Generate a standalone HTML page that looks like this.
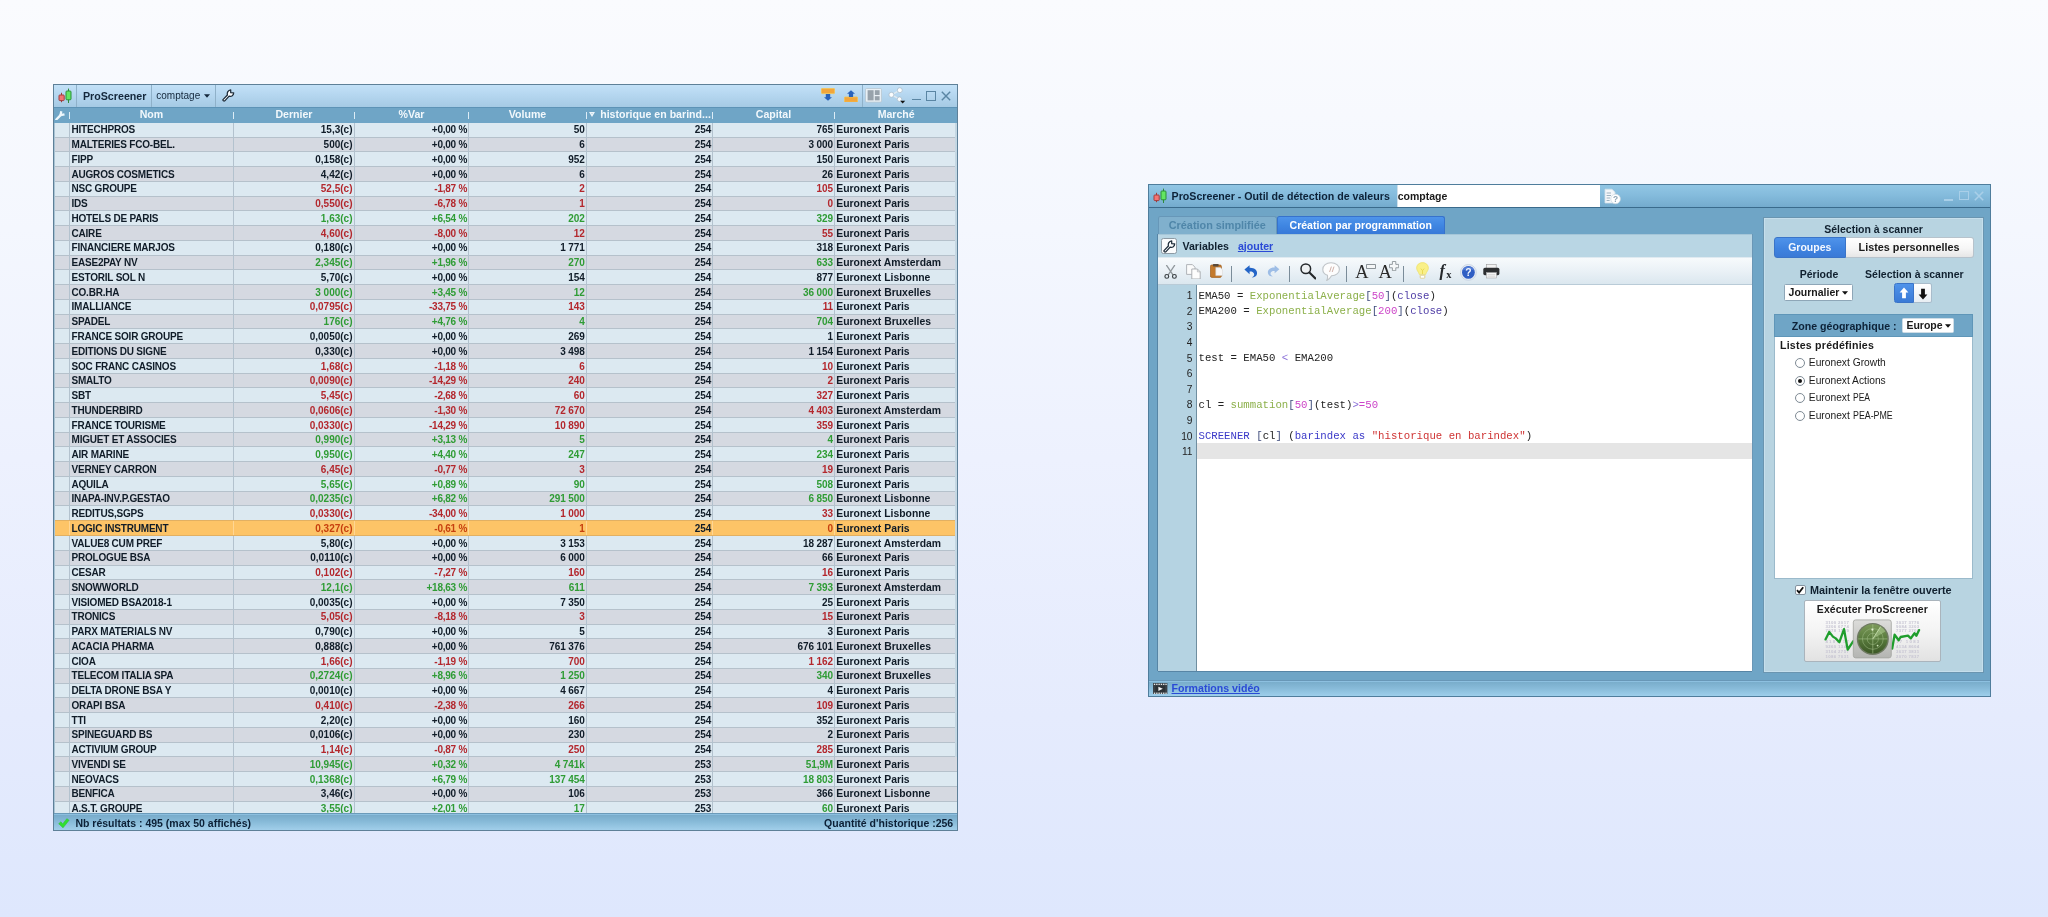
<!DOCTYPE html>
<html><head><meta charset="utf-8"><title>ProScreener</title>
<style>
*{box-sizing:border-box;margin:0;padding:0}
html,body{width:2048px;height:917px;overflow:hidden}
body{font-family:"Liberation Sans",sans-serif;font-size:10.6px;background:linear-gradient(180deg,#fafbfe 0%,#f4f7fe 25%,#edf1fe 50%,#e5ebfd 78%,#dee7fd 100%);position:relative;color:#10202f}
.abs{position:absolute}
b,.b{font-weight:bold}
/* ---------- left window ---------- */
#lw{will-change:transform;position:absolute;left:53px;top:84px;width:905px;height:746.6px;background:#a9c3d4;overflow:hidden}
#lw .frame{position:absolute;left:0;top:0;right:0;bottom:0;border:1px solid #5e8098;z-index:20;pointer-events:none}
#ltb{position:absolute;left:0;top:0;width:100%;height:22.9px;background:linear-gradient(180deg,#c4e2f8 0%,#b6d7f0 45%,#a5cae4 100%)}
#ltb .sp{position:absolute;top:1px;width:1.2px;height:22px;background:#8fb1c9}
#lhd{position:absolute;left:0;top:22.9px;width:100%;height:15.9px;background:#6fa5c6;color:#f2f8fc;font-weight:bold;font-size:10.6px;line-height:15.9px;border-top:1px solid #5d93b6}
#lhd .h{position:absolute;top:-1px;text-align:center;white-space:nowrap}
#lhd .t{position:absolute;top:4.2px;width:1px;height:7.4px;background:#dcecf6}
.row{position:absolute;left:1.5px;width:902.5px;height:14.757px;font-weight:bold;font-size:10px;line-height:14.757px;white-space:nowrap;color:#101c28}
.row:after{content:"";position:absolute;left:0;right:0;bottom:0;height:1px;background:#b5c1cb}
.row.o{background:#dce9f1}
.row.e{background:#d5d9e1}
.row.hl{background:#fdc467;z-index:6;box-shadow:0 -1px 0 #e2b062}
.hv{position:absolute;top:0;width:1px;height:100%;background:#ffd694}
.row.hl:after{background:#e2b062}
.c{position:absolute;top:.6px;height:100%;overflow:visible}
.c i{font-style:normal;display:inline-block;transform-origin:100% 50%}
.nm{left:17px;letter-spacing:-0.2px}
.d1{right:604.5px;text-align:right}
.d2{right:489.9px;text-align:right}
.d3{right:372.3px;text-align:right}
.d4{right:245.9px;text-align:right}
.d5{right:124px;text-align:right}
.d2{letter-spacing:-.24px}
.d3,.d4,.d5{letter-spacing:-.1px}
.mk{left:781.8px;font-size:10.4px}
.r{color:#b3272d}
.g{color:#2f9c35}
.hl .r{color:#c7400f}
.vs{position:absolute;top:38.8px;width:1px;height:692px;background:#b3c2ce;z-index:5}
#lst{position:absolute;left:0;top:728.6px;width:100%;height:18px;background:linear-gradient(180deg,#6b9bba 0,#6b9bba 1px,#8cbfdf 1px,#8cbfdf 2px,#78abca 2px,#88bbd9 50%,#a4d1ec 100%);font-weight:bold;font-size:10.5px;line-height:17px;color:#0c2036;z-index:10}
/* ---------- right window ---------- */
#rw{will-change:transform;position:absolute;left:1148px;top:184px;width:843px;height:513px;background:#6fa5c6;overflow:hidden}
#rw .frame{position:absolute;left:0;top:0;right:0;bottom:0;border:1px solid #4f7d9c;z-index:20}
#rtb{position:absolute;left:0;top:0;width:100%;height:23.6px;background:linear-gradient(180deg,#93c7e5 0%,#84bbdc 50%,#74abcd 100%);border-bottom:1.2px solid #3a6b8c;font-weight:bold;font-size:10.65px}
#rbot{position:absolute;left:0;top:495.6px;width:100%;height:17.4px;background:linear-gradient(180deg,#6897b7 0,#6897b7 1px,#8dc0e0 1px,#8dc0e0 2px,#79adcb 2px,#88bbd9 50%,#a0d1ee 100%)}
.tab{position:absolute;top:32.3px;height:17.5px;border-radius:2.5px 2.5px 0 0;font-weight:bold;font-size:10.6px;line-height:17.5px;text-align:center;white-space:nowrap}
#ed{position:absolute;left:9.9px;top:49.8px;width:594.2px;height:437.2px;background:#fff;box-shadow:-1px 0 0 #5785a5,1px 0 0 #6a97b6,0 1px 0 #5785a5}
#varbar{position:absolute;left:0;top:0;width:100%;height:23.7px;background:#b9d6e4;border-top:1px solid #a5c6d8}
#tbar{position:absolute;left:0;top:23.7px;width:100%;height:27.5px;background:linear-gradient(180deg,#f7fafc 0%,#eaf1f6 50%,#dbe7ef 100%);border-top:1px solid #dfeaf1;border-bottom:1px solid #b9cbd7}
#gut{position:absolute;left:0;top:51.2px;width:39.4px;height:386px;background:#b5d3e2;border-right:1px solid #6f8ea0}
#code{position:absolute;left:39.4px;top:51.2px;width:554.8px;height:386px;background:#fff}
.ln{position:absolute;left:0;width:34.6px;text-align:right;font-size:10.2px;line-height:15.6px;height:15.6px;color:#222}
.cl{position:absolute;left:1.2px;font-family:"Liberation Mono",monospace;font-size:10.7px;line-height:15.6px;height:15.6px;white-space:pre;color:#222}
.fn{color:#8cb04a}.nu{color:#cc44c8}.kw{color:#3a38c8}.st{color:#cf3434}.op{color:#8a70d8}.br{color:#3f4c7c}
#rp{position:absolute;left:616px;top:33.5px;width:219.2px;height:454.5px;background:#b8d4e1;border:1px solid #c6dfec;box-shadow:0 0 0 1px #6a95b0;font-weight:bold;font-size:10.5px;white-space:nowrap}
.rd{left:30.2px;width:10.2px;height:10.2px;border-radius:50%;background:radial-gradient(circle at 50% 40%,#fff 55%,#eceff1 100%);border:1px solid #7f8b95}
.rd span{position:absolute;left:1.9px;top:1.9px;width:4.4px;height:4.4px;border-radius:50%;background:#111}
.sq{display:inline-block;transform-origin:0 50%}
.rt{left:43.8px;font-weight:normal;font-size:10.25px;line-height:12px;color:#1a1a1a}
.kw2{color:#5240a8}
</style></head><body>

<!-- ================= LEFT WINDOW ================= -->
<div id="lw">
 <div id="ltb">
  <div class="sp" style="left:23px"></div>
  <div class="sp" style="left:98px"></div>
  <div class="sp" style="left:161.9px"></div>
  <div class="sp" style="left:809px"></div>
  <svg class="abs" style="left:4.7px;top:4px" width="15px" height="16px" viewBox="0 0 15 16"><path d="M3.5 4.8V14.2" stroke="#a03a3a" stroke-width="1"/><rect x="1" y="7" width="5.2" height="5.6" rx=".8" fill="#f47474" stroke="#a33c3c" stroke-width="1"/><path d="M10.5 .6V15" stroke="#2f8a3a" stroke-width="1"/><rect x="8" y="3" width="5" height="8.8" rx=".9" fill="#62e662" stroke="#2b8f38" stroke-width="1"/></svg>
<svg class="abs" style="left:169.1px;top:4.6px" width="13" height="13" viewBox="0 0 13 13"><path d="M1 10.6 L5.4 6 C4.8 3.5 6.1 1.1 8.7 .8 L8.7 3.7 L11.7 3.8 C11.7 6.4 9.5 7.7 7.1 7.1 L2.8 11.8 C1.9 12.4 .6 11.6 1 10.6 Z" fill="#fcfdfe" stroke="#1d2b38" stroke-width="1.25" stroke-linejoin="round"/></svg>
<svg class="abs" style="left:767.6px;top:4.4px" width="14" height="13.4" viewBox="0 0 14 13.4"><rect x=".4" y=".4" width="13.2" height="5.2" rx=".8" fill="#f2a63c" stroke="#f6c54e" stroke-width=".8"/><path d="M4.8 6h4.4v3.2h1.8L7 12.8 3 9.2h1.8z" fill="#2a63ba"/></svg>
<svg class="abs" style="left:790.8px;top:5.6px" width="14" height="12.6" viewBox="0 0 14 12.6"><rect x=".4" y="7" width="13.2" height="5.2" rx=".8" fill="#f2a63c" stroke="#f6c54e" stroke-width=".8"/><path d="M4.9 7V3.7H3L7 .2l4 3.5H9.1V7z" fill="#2a63ba"/></svg>
<svg class="abs" style="left:812.1px;top:4px" width="17" height="14.6" viewBox="0 0 17 14.6"><rect x=".5" y=".5" width="16" height="13.6" rx="1" fill="#e9f0f5" stroke="#b7c6d1" stroke-width=".8"/><rect x="2.6" y="2.2" width="6" height="10.2" fill="#97a2ab"/><rect x="9.8" y="2.2" width="4.8" height="4.8" fill="#97a2ab"/><rect x="9.8" y="8.2" width="4.8" height="4.2" fill="#97a2ab"/></svg>
<svg class="abs" style="left:834.8px;top:2.6px" width="19" height="17" viewBox="0 0 19 17"><path d="M3.6 7.8 L11.8 3.2 M3.6 7.8 L11.6 12.2" stroke="#dfe9f0" stroke-width="1.5" fill="none"/><circle cx="3.4" cy="7.8" r="2.5" fill="#fbfdfe" stroke="#a9bccb" stroke-width=".8"/><circle cx="11.8" cy="3.2" r="2.5" fill="#fbfdfe" stroke="#a9bccb" stroke-width=".8"/><circle cx="11.5" cy="12.2" r="2.3" fill="#fbfdfe" stroke="#a9bccb" stroke-width=".8"/><path d="M12.2 13.8h5l-2.5 2.6z" fill="#111"/></svg>
<div class="abs" style="left:858.9px;top:15.2px;width:8.8px;height:1.3px;background:#5a85a3"></div>
<div class="abs" style="left:873.2px;top:7.4px;width:9.8px;height:9.6px;border:1.2px solid #5a85a3;border-top-width:1.6px"></div>
<svg class="abs" style="left:888px;top:7.2px" width="10" height="10" viewBox="0 0 10 10"><path d="M.8 .8 L9.2 9.2 M9.2 .8 L.8 9.2" stroke="#5a85a3" stroke-width="1.4" fill="none"/></svg>
  <div class="abs b" style="left:29.9px;top:5.9px;font-size:10.7px;line-height:12px;color:#14283c">ProScreener</div>
  <div class="abs" style="left:103.3px;top:6.4px;font-size:10px;line-height:12px;color:#14283c">comptage</div>
  <svg class="abs" style="left:151.4px;top:10.4px" width="6" height="4" viewBox="0 0 6 4"><path d="M0 .2H6L3 3.8z" fill="#14283c"/></svg>
 </div>
 <div id="lhd">
  <div class="t" style="left:16px"></div>
<div class="t" style="left:180px"></div>
<div class="t" style="left:301px"></div>
<div class="t" style="left:415px"></div>
<div class="t" style="left:533px"></div>
<div class="t" style="left:659px"></div>
<div class="t" style="left:781px"></div>
<div class="h" style="left:16.4px;width:164.1px">Nom</div>
<div class="h" style="left:180.5px;width:120.9px">Dernier</div>
<div class="h" style="left:301.4px;width:114.2px">%Var</div>
<div class="h" style="left:415.6px;width:117.8px">Volume</div>
<div class="h" style="left:547.2px;text-align:left">historique en barind...</div>
<div class="abs" style="left:535.9px;top:4.6px;width:0;height:0;border-left:3.4px solid transparent;border-right:3.4px solid transparent;border-top:5.2px solid #edf5fa"></div>
<div class="abs" style="left:538.1px;top:5.6px;width:0;height:0;border-left:1.2px solid transparent;border-right:1.2px solid transparent;border-top:1.8px solid #a9c9dd"></div>
<div class="h" style="left:659.6px;width:121.8px">Capital</div>
<div class="h" style="left:781.4px;width:123.6px">Marché</div>
<svg class="abs" style="left:2.2px;top:1.7px" width="10.6" height="10.6" viewBox="0 0 10.6 10.6"><path d="M1.3 9.5 L5.6 5.1" stroke="#eef7fc" stroke-width="2.3" stroke-linecap="round" fill="none"/><path d="M5.5 5.2 L6.3 1.2 M5.5 5.2 L9.5 4.4" stroke="#eef7fc" stroke-width="2.3" stroke-linecap="butt" fill="none"/></svg>
 </div>
<div class="row o" style="top:38.8px"><span class="c nm">HITECHPROS</span><span class="c d1 k"><i>15,3(c)</i></span><span class="c d2 k"><i>+0,00 %</i></span><span class="c d3 k"><i>50</i></span><span class="c d4"><i>254</i></span><span class="c d5 k"><i>765</i></span><span class="c mk">Euronext Paris</span></div>
<div class="row e" style="top:53.56px"><span class="c nm">MALTERIES FCO-BEL.</span><span class="c d1 k"><i>500(c)</i></span><span class="c d2 k"><i>+0,00 %</i></span><span class="c d3 k"><i>6</i></span><span class="c d4"><i>254</i></span><span class="c d5 k"><i>3 000</i></span><span class="c mk">Euronext Paris</span></div>
<div class="row o" style="top:68.31px"><span class="c nm">FIPP</span><span class="c d1 k"><i>0,158(c)</i></span><span class="c d2 k"><i>+0,00 %</i></span><span class="c d3 k"><i>952</i></span><span class="c d4"><i>254</i></span><span class="c d5 k"><i>150</i></span><span class="c mk">Euronext Paris</span></div>
<div class="row e" style="top:83.07px"><span class="c nm">AUGROS COSMETICS</span><span class="c d1 k"><i>4,42(c)</i></span><span class="c d2 k"><i>+0,00 %</i></span><span class="c d3 k"><i>6</i></span><span class="c d4"><i>254</i></span><span class="c d5 k"><i>26</i></span><span class="c mk">Euronext Paris</span></div>
<div class="row o" style="top:97.83px"><span class="c nm">NSC GROUPE</span><span class="c d1 r"><i>52,5(c)</i></span><span class="c d2 r"><i>-1,87 %</i></span><span class="c d3 r"><i>2</i></span><span class="c d4"><i>254</i></span><span class="c d5 r"><i>105</i></span><span class="c mk">Euronext Paris</span></div>
<div class="row e" style="top:112.58px"><span class="c nm">IDS</span><span class="c d1 r"><i>0,550(c)</i></span><span class="c d2 r"><i>-6,78 %</i></span><span class="c d3 r"><i>1</i></span><span class="c d4"><i>254</i></span><span class="c d5 r"><i>0</i></span><span class="c mk">Euronext Paris</span></div>
<div class="row o" style="top:127.34px"><span class="c nm">HOTELS DE PARIS</span><span class="c d1 g"><i>1,63(c)</i></span><span class="c d2 g"><i>+6,54 %</i></span><span class="c d3 g"><i>202</i></span><span class="c d4"><i>254</i></span><span class="c d5 g"><i>329</i></span><span class="c mk">Euronext Paris</span></div>
<div class="row e" style="top:142.1px"><span class="c nm">CAIRE</span><span class="c d1 r"><i>4,60(c)</i></span><span class="c d2 r"><i>-8,00 %</i></span><span class="c d3 r"><i>12</i></span><span class="c d4"><i>254</i></span><span class="c d5 r"><i>55</i></span><span class="c mk">Euronext Paris</span></div>
<div class="row o" style="top:156.86px"><span class="c nm">FINANCIERE MARJOS</span><span class="c d1 k"><i>0,180(c)</i></span><span class="c d2 k"><i>+0,00 %</i></span><span class="c d3 k"><i>1 771</i></span><span class="c d4"><i>254</i></span><span class="c d5 k"><i>318</i></span><span class="c mk">Euronext Paris</span></div>
<div class="row e" style="top:171.61px"><span class="c nm">EASE2PAY NV</span><span class="c d1 g"><i>2,345(c)</i></span><span class="c d2 g"><i>+1,96 %</i></span><span class="c d3 g"><i>270</i></span><span class="c d4"><i>254</i></span><span class="c d5 g"><i>633</i></span><span class="c mk">Euronext Amsterdam</span></div>
<div class="row o" style="top:186.37px"><span class="c nm">ESTORIL SOL N</span><span class="c d1 k"><i>5,70(c)</i></span><span class="c d2 k"><i>+0,00 %</i></span><span class="c d3 k"><i>154</i></span><span class="c d4"><i>254</i></span><span class="c d5 k"><i>877</i></span><span class="c mk">Euronext Lisbonne</span></div>
<div class="row e" style="top:201.13px"><span class="c nm">CO.BR.HA</span><span class="c d1 g"><i>3 000(c)</i></span><span class="c d2 g"><i>+3,45 %</i></span><span class="c d3 g"><i>12</i></span><span class="c d4"><i>254</i></span><span class="c d5 g"><i>36 000</i></span><span class="c mk">Euronext Bruxelles</span></div>
<div class="row o" style="top:215.88px"><span class="c nm">IMALLIANCE</span><span class="c d1 r"><i>0,0795(c)</i></span><span class="c d2 r"><i>-33,75 %</i></span><span class="c d3 r"><i>143</i></span><span class="c d4"><i>254</i></span><span class="c d5 r"><i>11</i></span><span class="c mk">Euronext Paris</span></div>
<div class="row e" style="top:230.64px"><span class="c nm">SPADEL</span><span class="c d1 g"><i>176(c)</i></span><span class="c d2 g"><i>+4,76 %</i></span><span class="c d3 g"><i>4</i></span><span class="c d4"><i>254</i></span><span class="c d5 g"><i>704</i></span><span class="c mk">Euronext Bruxelles</span></div>
<div class="row o" style="top:245.4px"><span class="c nm">FRANCE SOIR GROUPE</span><span class="c d1 k"><i>0,0050(c)</i></span><span class="c d2 k"><i>+0,00 %</i></span><span class="c d3 k"><i>269</i></span><span class="c d4"><i>254</i></span><span class="c d5 k"><i>1</i></span><span class="c mk">Euronext Paris</span></div>
<div class="row e" style="top:260.15px"><span class="c nm">EDITIONS DU SIGNE</span><span class="c d1 k"><i>0,330(c)</i></span><span class="c d2 k"><i>+0,00 %</i></span><span class="c d3 k"><i>3 498</i></span><span class="c d4"><i>254</i></span><span class="c d5 k"><i>1 154</i></span><span class="c mk">Euronext Paris</span></div>
<div class="row o" style="top:274.91px"><span class="c nm">SOC FRANC CASINOS</span><span class="c d1 r"><i>1,68(c)</i></span><span class="c d2 r"><i>-1,18 %</i></span><span class="c d3 r"><i>6</i></span><span class="c d4"><i>254</i></span><span class="c d5 r"><i>10</i></span><span class="c mk">Euronext Paris</span></div>
<div class="row e" style="top:289.67px"><span class="c nm">SMALTO</span><span class="c d1 r"><i>0,0090(c)</i></span><span class="c d2 r"><i>-14,29 %</i></span><span class="c d3 r"><i>240</i></span><span class="c d4"><i>254</i></span><span class="c d5 r"><i>2</i></span><span class="c mk">Euronext Paris</span></div>
<div class="row o" style="top:304.43px"><span class="c nm">SBT</span><span class="c d1 r"><i>5,45(c)</i></span><span class="c d2 r"><i>-2,68 %</i></span><span class="c d3 r"><i>60</i></span><span class="c d4"><i>254</i></span><span class="c d5 r"><i>327</i></span><span class="c mk">Euronext Paris</span></div>
<div class="row e" style="top:319.18px"><span class="c nm">THUNDERBIRD</span><span class="c d1 r"><i>0,0606(c)</i></span><span class="c d2 r"><i>-1,30 %</i></span><span class="c d3 r"><i>72 670</i></span><span class="c d4"><i>254</i></span><span class="c d5 r"><i>4 403</i></span><span class="c mk">Euronext Amsterdam</span></div>
<div class="row o" style="top:333.94px"><span class="c nm">FRANCE TOURISME</span><span class="c d1 r"><i>0,0330(c)</i></span><span class="c d2 r"><i>-14,29 %</i></span><span class="c d3 r"><i>10 890</i></span><span class="c d4"><i>254</i></span><span class="c d5 r"><i>359</i></span><span class="c mk">Euronext Paris</span></div>
<div class="row e" style="top:348.7px"><span class="c nm">MIGUET ET ASSOCIES</span><span class="c d1 g"><i>0,990(c)</i></span><span class="c d2 g"><i>+3,13 %</i></span><span class="c d3 g"><i>5</i></span><span class="c d4"><i>254</i></span><span class="c d5 g"><i>4</i></span><span class="c mk">Euronext Paris</span></div>
<div class="row o" style="top:363.45px"><span class="c nm">AIR MARINE</span><span class="c d1 g"><i>0,950(c)</i></span><span class="c d2 g"><i>+4,40 %</i></span><span class="c d3 g"><i>247</i></span><span class="c d4"><i>254</i></span><span class="c d5 g"><i>234</i></span><span class="c mk">Euronext Paris</span></div>
<div class="row e" style="top:378.21px"><span class="c nm">VERNEY CARRON</span><span class="c d1 r"><i>6,45(c)</i></span><span class="c d2 r"><i>-0,77 %</i></span><span class="c d3 r"><i>3</i></span><span class="c d4"><i>254</i></span><span class="c d5 r"><i>19</i></span><span class="c mk">Euronext Paris</span></div>
<div class="row o" style="top:392.97px"><span class="c nm">AQUILA</span><span class="c d1 g"><i>5,65(c)</i></span><span class="c d2 g"><i>+0,89 %</i></span><span class="c d3 g"><i>90</i></span><span class="c d4"><i>254</i></span><span class="c d5 g"><i>508</i></span><span class="c mk">Euronext Paris</span></div>
<div class="row e" style="top:407.73px"><span class="c nm">INAPA-INV.P.GESTAO</span><span class="c d1 g"><i>0,0235(c)</i></span><span class="c d2 g"><i>+6,82 %</i></span><span class="c d3 g"><i>291 500</i></span><span class="c d4"><i>254</i></span><span class="c d5 g"><i>6 850</i></span><span class="c mk">Euronext Lisbonne</span></div>
<div class="row o" style="top:422.48px"><span class="c nm">REDITUS,SGPS</span><span class="c d1 r"><i>0,0330(c)</i></span><span class="c d2 r"><i>-34,00 %</i></span><span class="c d3 r"><i>1 000</i></span><span class="c d4"><i>254</i></span><span class="c d5 r"><i>33</i></span><span class="c mk">Euronext Lisbonne</span></div>
<div class="row hl" style="top:437.24px"><span class="c nm">LOGIC INSTRUMENT</span><span class="c d1 r"><i>0,327(c)</i></span><span class="c d2 r"><i>-0,61 %</i></span><span class="c d3 r"><i>1</i></span><span class="c d4"><i>254</i></span><span class="c d5 r"><i>0</i></span><span class="c mk">Euronext Paris</span><div class="hv" style="left:14px"></div><div class="hv" style="left:178px"></div><div class="hv" style="left:299px"></div><div class="hv" style="left:413px"></div><div class="hv" style="left:531px"></div><div class="hv" style="left:657px"></div><div class="hv" style="left:779px"></div></div>
<div class="row o" style="top:452px"><span class="c nm">VALUE8 CUM PREF</span><span class="c d1 k"><i>5,80(c)</i></span><span class="c d2 k"><i>+0,00 %</i></span><span class="c d3 k"><i>3 153</i></span><span class="c d4"><i>254</i></span><span class="c d5 k"><i>18 287</i></span><span class="c mk">Euronext Amsterdam</span></div>
<div class="row e" style="top:466.75px"><span class="c nm">PROLOGUE BSA</span><span class="c d1 k"><i>0,0110(c)</i></span><span class="c d2 k"><i>+0,00 %</i></span><span class="c d3 k"><i>6 000</i></span><span class="c d4"><i>254</i></span><span class="c d5 k"><i>66</i></span><span class="c mk">Euronext Paris</span></div>
<div class="row o" style="top:481.51px"><span class="c nm">CESAR</span><span class="c d1 r"><i>0,102(c)</i></span><span class="c d2 r"><i>-7,27 %</i></span><span class="c d3 r"><i>160</i></span><span class="c d4"><i>254</i></span><span class="c d5 r"><i>16</i></span><span class="c mk">Euronext Paris</span></div>
<div class="row e" style="top:496.27px"><span class="c nm">SNOWWORLD</span><span class="c d1 g"><i>12,1(c)</i></span><span class="c d2 g"><i>+18,63 %</i></span><span class="c d3 g"><i>611</i></span><span class="c d4"><i>254</i></span><span class="c d5 g"><i>7 393</i></span><span class="c mk">Euronext Amsterdam</span></div>
<div class="row o" style="top:511.02px"><span class="c nm">VISIOMED BSA2018-1</span><span class="c d1 k"><i>0,0035(c)</i></span><span class="c d2 k"><i>+0,00 %</i></span><span class="c d3 k"><i>7 350</i></span><span class="c d4"><i>254</i></span><span class="c d5 k"><i>25</i></span><span class="c mk">Euronext Paris</span></div>
<div class="row e" style="top:525.78px"><span class="c nm">TRONICS</span><span class="c d1 r"><i>5,05(c)</i></span><span class="c d2 r"><i>-8,18 %</i></span><span class="c d3 r"><i>3</i></span><span class="c d4"><i>254</i></span><span class="c d5 r"><i>15</i></span><span class="c mk">Euronext Paris</span></div>
<div class="row o" style="top:540.54px"><span class="c nm">PARX MATERIALS NV</span><span class="c d1 k"><i>0,790(c)</i></span><span class="c d2 k"><i>+0,00 %</i></span><span class="c d3 k"><i>5</i></span><span class="c d4"><i>254</i></span><span class="c d5 k"><i>3</i></span><span class="c mk">Euronext Paris</span></div>
<div class="row e" style="top:555.29px"><span class="c nm">ACACIA PHARMA</span><span class="c d1 k"><i>0,888(c)</i></span><span class="c d2 k"><i>+0,00 %</i></span><span class="c d3 k"><i>761 376</i></span><span class="c d4"><i>254</i></span><span class="c d5 k"><i>676 101</i></span><span class="c mk">Euronext Bruxelles</span></div>
<div class="row o" style="top:570.05px"><span class="c nm">CIOA</span><span class="c d1 r"><i>1,66(c)</i></span><span class="c d2 r"><i>-1,19 %</i></span><span class="c d3 r"><i>700</i></span><span class="c d4"><i>254</i></span><span class="c d5 r"><i>1 162</i></span><span class="c mk">Euronext Paris</span></div>
<div class="row e" style="top:584.81px"><span class="c nm">TELECOM ITALIA SPA</span><span class="c d1 g"><i>0,2724(c)</i></span><span class="c d2 g"><i>+8,96 %</i></span><span class="c d3 g"><i>1 250</i></span><span class="c d4"><i>254</i></span><span class="c d5 g"><i>340</i></span><span class="c mk">Euronext Bruxelles</span></div>
<div class="row o" style="top:599.57px"><span class="c nm">DELTA DRONE BSA Y</span><span class="c d1 k"><i>0,0010(c)</i></span><span class="c d2 k"><i>+0,00 %</i></span><span class="c d3 k"><i>4 667</i></span><span class="c d4"><i>254</i></span><span class="c d5 k"><i>4</i></span><span class="c mk">Euronext Paris</span></div>
<div class="row e" style="top:614.32px"><span class="c nm">ORAPI BSA</span><span class="c d1 r"><i>0,410(c)</i></span><span class="c d2 r"><i>-2,38 %</i></span><span class="c d3 r"><i>266</i></span><span class="c d4"><i>254</i></span><span class="c d5 r"><i>109</i></span><span class="c mk">Euronext Paris</span></div>
<div class="row o" style="top:629.08px"><span class="c nm">TTI</span><span class="c d1 k"><i>2,20(c)</i></span><span class="c d2 k"><i>+0,00 %</i></span><span class="c d3 k"><i>160</i></span><span class="c d4"><i>254</i></span><span class="c d5 k"><i>352</i></span><span class="c mk">Euronext Paris</span></div>
<div class="row e" style="top:643.84px"><span class="c nm">SPINEGUARD BS</span><span class="c d1 k"><i>0,0106(c)</i></span><span class="c d2 k"><i>+0,00 %</i></span><span class="c d3 k"><i>230</i></span><span class="c d4"><i>254</i></span><span class="c d5 k"><i>2</i></span><span class="c mk">Euronext Paris</span></div>
<div class="row o" style="top:658.59px"><span class="c nm">ACTIVIUM GROUP</span><span class="c d1 r"><i>1,14(c)</i></span><span class="c d2 r"><i>-0,87 %</i></span><span class="c d3 r"><i>250</i></span><span class="c d4"><i>254</i></span><span class="c d5 r"><i>285</i></span><span class="c mk">Euronext Paris</span></div>
<div class="row e" style="top:673.35px"><span class="c nm">VIVENDI SE</span><span class="c d1 g"><i>10,945(c)</i></span><span class="c d2 g"><i>+0,32 %</i></span><span class="c d3 g"><i>4 741k</i></span><span class="c d4"><i>253</i></span><span class="c d5 g"><i>51,9M</i></span><span class="c mk">Euronext Paris</span></div>
<div class="row o" style="top:688.11px"><span class="c nm">NEOVACS</span><span class="c d1 g"><i>0,1368(c)</i></span><span class="c d2 g"><i>+6,79 %</i></span><span class="c d3 g"><i>137 454</i></span><span class="c d4"><i>253</i></span><span class="c d5 g"><i>18 803</i></span><span class="c mk">Euronext Paris</span></div>
<div class="row e" style="top:702.86px"><span class="c nm">BENFICA</span><span class="c d1 k"><i>3,46(c)</i></span><span class="c d2 k"><i>+0,00 %</i></span><span class="c d3 k"><i>106</i></span><span class="c d4"><i>253</i></span><span class="c d5 k"><i>366</i></span><span class="c mk">Euronext Lisbonne</span></div>
<div class="row o" style="top:717.62px"><span class="c nm">A.S.T. GROUPE</span><span class="c d1 g"><i>3,55(c)</i></span><span class="c d2 g"><i>+2,01 %</i></span><span class="c d3 g"><i>17</i></span><span class="c d4"><i>253</i></span><span class="c d5 g"><i>60</i></span><span class="c mk">Euronext Paris</span></div>
<div class="vs" style="left:16px"></div><div class="vs" style="left:180px"></div><div class="vs" style="left:301px"></div><div class="vs" style="left:415px"></div><div class="vs" style="left:533px"></div><div class="vs" style="left:659px"></div><div class="vs" style="left:781px"></div>
 <div id="lst">
  <svg class="abs" style="left:5.4px;top:5px" width="11.6" height="10.4" viewBox="0 0 13 12"><path d="M.6 6.6 L3.2 4.4 L5.2 6.8 L10 .8 L12.6 2.6 L5.6 11.4 Z" fill="#2fe02f" stroke="#2bbd2b" stroke-width=".6"/></svg>
  <span class="abs" style="left:22.4px;top:2.3px">Nb résultats : 495 (max 50 affichés)</span>
  <span class="abs" style="right:4.8px;top:2.3px">Quantité d'historique :256</span>
 </div>
 <div class="abs" style="right:1px;top:38.8px;width:2px;height:634px;background:#c4d7e3;z-index:6"></div>
 <div class="frame"></div>
</div>

<!-- ================= RIGHT WINDOW ================= -->
<div id="rw">
 <div id="rtb">
  <div class="abs" style="left:23.6px;top:6.3px;line-height:12px;color:#0d2238;white-space:nowrap">ProScreener - Outil de détection de valeurs</div>
  <div class="abs" style="left:248.7px;top:0.8px;width:203.1px;height:22px;background:#fff;border-left:1px solid #cfe0ea"><span class="abs" style="left:0;top:5.5px;font-size:10.5px;line-height:12px;color:#1b1b1b">comptage</span></div>
  <svg class="abs" style="left:5.4px;top:4.1px" width="15px" height="16px" viewBox="0 0 15 16"><path d="M3.5 4.8V14.2" stroke="#a03a3a" stroke-width="1"/><rect x="1" y="7" width="5.2" height="5.6" rx=".8" fill="#f47474" stroke="#a33c3c" stroke-width="1"/><path d="M10.5 .6V15" stroke="#2f8a3a" stroke-width="1"/><rect x="8" y="3" width="5" height="8.8" rx=".9" fill="#62e662" stroke="#2b8f38" stroke-width="1"/></svg>
<svg class="abs" style="left:456.4px;top:3.6px" width="18" height="17" viewBox="0 0 18 17"><path d="M1 1.2h7l3 3V15H1z" fill="#f4f7fa" stroke="#d3e0e8" stroke-width=".8"/><path d="M2.6 5h4.4M2.6 7.5h4.4M2.6 10h3.4M2.6 12.5h3" stroke="#9fb2c0" stroke-width="1"/><circle cx="11.6" cy="11" r="4.8" fill="#fff" stroke="#c9d7e0" stroke-width=".7"/><text x="11.6" y="14" font-family="Liberation Sans" font-weight="bold" font-size="8.4" text-anchor="middle" fill="#8fa5b5">?</text></svg>
<div class="abs" style="left:796.4px;top:15px;width:8.8px;height:1.5px;background:#a9cfe8"></div>
<div class="abs" style="left:811.2px;top:6.8px;width:9.6px;height:9.4px;border:1.4px solid #a9cfe8;border-top-width:1.9px"></div>
<svg class="abs" style="left:826.2px;top:6.8px" width="10" height="10" viewBox="0 0 10 10"><path d="M.8 .8 L9.2 9.2 M9.2 .8 L.8 9.2" stroke="#a9cfe8" stroke-width="1.6" fill="none"/></svg>
 </div>
 <div class="tab" style="left:9.9px;width:118.8px;background:#80b0cd;color:#4f86a9;border:1px solid #6797b8;border-bottom:none;font-size:10.85px">Création simplifiée</div>
 <div class="tab" style="left:128.7px;width:168.1px;background:linear-gradient(180deg,#4e94ea 0%,#3f86e2 50%,#3779d8 100%);color:#fff;border:1px solid #3672cc;border-bottom:none;font-size:10.55px">Création par programmation</div>
 <div id="ed">
  <div id="varbar">
   <div class="abs" style="left:3.2px;top:3.4px;width:16.4px;height:15.6px;background:#fbfcfd;border:1px solid #8d9aa4;border-radius:2.4px"></div><svg class="abs" style="left:4.8px;top:5.4px" width="13" height="13" viewBox="0 0 13 13"><path d="M1 10.6 L5.4 6 C4.8 3.5 6.1 1.1 8.7 .8 L8.7 3.7 L11.7 3.8 C11.7 6.4 9.5 7.7 7.1 7.1 L2.8 11.8 C1.9 12.4 .6 11.6 1 10.6 Z" fill="#fcfdfe" stroke="#1d2b38" stroke-width="1.25" stroke-linejoin="round"/></svg>
   <span class="abs b" style="left:24.6px;top:5.6px;line-height:12px;font-size:10.6px;color:#10202f">Variables</span>
   <span class="abs b" style="left:80px;top:5.6px;line-height:12px;font-size:10.6px;color:#2a4ad6;text-decoration:underline">ajouter</span>
  </div>
  <div id="tbar">
   <svg class="abs" style="left:6px;top:6.3px" width="13.2px" height="14px" viewBox="0 0 13.2 14"><path d="M2.6 .4 L8.8 9.6 M10.6 .4 L4.4 9.6" stroke="#90979b" stroke-width="1.3" fill="none" stroke-linecap="round"/><circle cx="2.8" cy="11.4" r="1.9" fill="none" stroke="#3a4044" stroke-width="1.15"/><circle cx="10.4" cy="11.4" r="1.9" fill="none" stroke="#3a4044" stroke-width="1.15"/></svg>
<svg class="abs" style="left:28px;top:5.4px" width="14.9px" height="15.6px" viewBox="0 0 14.9 15.6"><path d="M.6 .6H6.4L9 3.2V10.4H.6z" fill="#fbfbfb" stroke="#a9adb1" stroke-width=".9"/><path d="M5.8 5H11.4L14.2 7.8V15H5.8z" fill="#fdfdfd" stroke="#a6aaae" stroke-width=".9"/><path d="M11.4 5V7.8H14.2" fill="none" stroke="#b4b8bb" stroke-width=".8"/></svg>
<svg class="abs" style="left:51.7px;top:5.6px" width="13.2px" height="13.7px" viewBox="0 0 13.2 13.7"><rect x=".4" y="1" width="11" height="12.4" rx="1.4" fill="#c47a2c" stroke="#9c5c1c" stroke-width=".7"/><rect x="3" y="0" width="5.6" height="2.4" rx=".6" fill="#5a4a3a"/><path d="M5.8 3.6H10.4L12.8 6V11.6H5.8z" fill="#f7f7f7" stroke="#cfcfcf" stroke-width=".6"/></svg>
<div class="abs" style="left:73px;top:8px;width:1px;height:15.9px;background:#7a8c99"></div>
<svg class="abs" style="left:86.4px;top:6.7px" width="13.6px" height="12.8px" viewBox="0 0 13.6 12.8"><path d="M.4 4.6 L5.6 .2 V2.8 C10.6 2.6 13.6 5.6 13 9 C12.6 11.2 10.6 12.6 7.6 12.6 C9.8 11.6 10.6 10 10 8.6 C9.4 7 7.6 6.4 5.6 6.6 V9.2 Z" fill="#2465c7"/></svg>
<svg class="abs" style="left:109.3px;top:6.7px" width="13.1px" height="11.6px" viewBox="0 0 13.6 12.8"><g transform="translate(13.6,0) scale(-1,1)"><path d="M.4 4.6 L5.6 .2 V2.8 C10.6 2.6 13.6 5.6 13 9 C12.6 11.2 10.6 12.6 7.6 12.6 C9.8 11.6 10.6 10 10 8.6 C9.4 7 7.6 6.4 5.6 6.6 V9.2 Z" fill="#9dbde6"/></g></svg>
<div class="abs" style="left:131px;top:8px;width:1px;height:15.9px;background:#7a8c99"></div>
<svg class="abs" style="left:142.2px;top:5px" width="16.3px" height="16.2px" viewBox="0 0 16.3 16.2"><circle cx="5.8" cy="5.8" r="4.8" fill="#eef1f3" stroke="#24282b" stroke-width="1.5"/><path d="M9.4 9.6 L15.4 15.4" stroke="#24282b" stroke-width="2.1" stroke-linecap="round"/></svg>
<svg class="abs" style="left:164.3px;top:3.4px" width="18.2px" height="19.4px" viewBox="0 0 18.2 19.4"><path d="M9 .8 C13.8 .8 17.4 3.6 17.4 7.4 C17.4 11 14 13.6 9.6 13.8 C8.6 15.6 7.2 17.2 4.8 18.4 C5.6 16.6 5.8 15 5.4 13.2 C2.6 12.2 .8 10 .8 7.4 C.8 3.6 4.2 .8 9 .8 Z" fill="#fdfdfd" stroke="#bfc4c8" stroke-width="1.1"/><path d="M7.6 10 L9.4 4.6 M10.2 10 L12 4.6" stroke="#c9a8a0" stroke-width=".9"/></svg>
<div class="abs" style="left:188px;top:8px;width:1px;height:15.9px;background:#7a8c99"></div>
<div class="abs" style="left:197.3px;top:4.5px;font-family:'Liberation Serif',serif;font-size:18.4px;line-height:18px;color:#2a2a2a">A</div>
<div class="abs" style="left:207.7px;top:5.9px;width:10px;height:4.2px;background:#f4f6f7;border:1px solid #8c9499;border-radius:.8px"></div>
<div class="abs" style="left:220.6px;top:4.5px;font-family:'Liberation Serif',serif;font-size:18.4px;line-height:18px;color:#2a2a2a">A</div>
<svg class="abs" style="left:231.3px;top:2.7px" width="10.2px" height="10.2px" viewBox="0 0 10.2 10.2"><path d="M3.4 .5H6.8V3.4H9.7V6.8H6.8V9.7H3.4V6.8H.5V3.4H3.4z" fill="#f6f8f9" stroke="#8c9499" stroke-width=".9"/></svg>
<div class="abs" style="left:245px;top:8px;width:1px;height:15.9px;background:#7a8c99"></div>
<svg class="abs" style="left:258px;top:3.7px" width="13px" height="17.5px" viewBox="0 0 13 17.5"><path d="M6.5 .6 C10 .6 12.4 3 12.4 6 C12.4 8.6 10.4 9.8 9.6 12.6 H3.4 C2.6 9.8 .6 8.6 .6 6 C.6 3 3 .6 6.5 .6 Z" fill="#f9f088" stroke="#ecdf6c" stroke-width=".7"/><path d="M4.8 6.6 L6.5 8.6 L8.2 6.6 M6.5 8.6 V12" stroke="#e6d348" stroke-width=".8" fill="none"/><rect x="4" y="12.8" width="5" height="3.6" rx="1" fill="#efe6b4" stroke="#d8cf9c" stroke-width=".6"/><rect x="5" y="14" width="3" height="1.6" fill="#fff"/></svg>
<div class="abs" style="left:281.5px;top:3.4px;font-family:'Liberation Serif',serif;font-style:italic;font-weight:bold;font-size:16.2px;line-height:18px;color:#23272b">f</div>
<div class="abs" style="left:288.3px;top:11.9px;font-family:'Liberation Serif',serif;font-weight:bold;font-size:10.4px;line-height:10px;color:#23272b">x</div>
<svg class="abs" style="left:302.1px;top:5.4px" width="16.8px" height="16.8px" viewBox="0 0 16.8 16.8"><circle cx="8.4" cy="8.4" r="7.9" fill="#e9eef6" stroke="#c3cfe0" stroke-width=".8"/><circle cx="8.4" cy="8.4" r="6.4" fill="#2f5ec4"/><path d="M2.6 6.4 A6.2 6.2 0 0 1 14.2 6.4 A12 8 0 0 0 2.6 6.4Z" fill="#5d86dc" opacity=".8"/><text x="8.4" y="12.2" font-family="Liberation Sans" font-weight="bold" font-size="10.4" text-anchor="middle" fill="#f2f6ff">?</text></svg>
<svg class="abs" style="left:325.4px;top:5.8px" width="16.7px" height="14.5px" viewBox="0 0 16.7 14.5"><rect x="3.6" y=".4" width="9.6" height="4.6" fill="#f2f2f2" stroke="#9a9a9a" stroke-width=".6"/><rect x=".3" y="3.8" width="16.1" height="7.4" rx="1.6" fill="#2d2f31"/><rect x="3.4" y="8.6" width="10" height="5.4" fill="#f6f6f6" stroke="#a8a8a8" stroke-width=".6"/><path d="M4.6 10.6H12.2M4.6 12.2H12.2" stroke="#c4c4c4" stroke-width=".6"/></svg>
  </div>
  <div id="gut"><div class="ln" style="top:3.2px">1</div><div class="ln" style="top:18.8px">2</div><div class="ln" style="top:34.4px">3</div><div class="ln" style="top:50px">4</div><div class="ln" style="top:65.6px">5</div><div class="ln" style="top:81.2px">6</div><div class="ln" style="top:96.8px">7</div><div class="ln" style="top:112.4px">8</div><div class="ln" style="top:128px">9</div><div class="ln" style="top:143.6px">10</div><div class="ln" style="top:159.2px">11</div></div>
  <div id="code"><div class="abs" style="left:0;top:158.5px;width:100%;height:15.5px;background:#e5e5e5"></div><div class="cl" style="top:3.7px">EMA50 = <span class="fn">ExponentialAverage</span><span class="br">[</span><span class="nu">50</span><span class="br">]</span>(<span class="kw2">close</span>)</div><div class="cl" style="top:19.3px">EMA200 = <span class="fn">ExponentialAverage</span><span class="br">[</span><span class="nu">200</span><span class="br">]</span>(<span class="kw2">close</span>)</div><div class="cl" style="top:66.1px">test = EMA50 <span class="op">&lt;</span> EMA200</div><div class="cl" style="top:112.9px">cl = <span class="fn">summation</span><span class="br">[</span><span class="nu">50</span><span class="br">]</span>(test)<span class="op">&gt;</span><span class="nu">=50</span></div><div class="cl" style="top:144.1px"><span class="kw">SCREENER</span> <span class="br">[</span>cl<span class="br">]</span> (<span class="kw">barindex as</span> <span class="st">"historique en barindex"</span>)</div></div>
 </div>
 <div id="rp">
  <div class="abs" style="left:0;top:4.6px;width:100%;text-align:center;line-height:12px;color:#10202f">Sélection à scanner</div>
<div class="abs" style="left:9px;top:18.6px;width:71.5px;height:20.8px;background:linear-gradient(180deg,#4f93ea 0%,#3f83e0 55%,#3a7ad6 100%);border:1px solid #3a74c8;border-radius:3px 0 0 3px;color:#f4f8ff;text-align:center;line-height:19px">Groupes</div>
<div class="abs" style="left:80.5px;top:18.6px;width:128px;height:20.8px;background:linear-gradient(180deg,#ffffff 0%,#f6f6f6 55%,#e6e6e6 100%);border:1px solid #b7c3cc;border-left:none;border-radius:0 3px 3px 0;color:#1a1a1a;text-align:center;line-height:19px;font-size:10.8px">Listes personnelles</div>
<div class="abs" style="left:14px;top:49.6px;width:80px;text-align:center;line-height:12px;color:#10202f">Période</div>
<div class="abs" style="left:99.4px;top:49.6px;width:100px;text-align:center;line-height:12px;color:#10202f">Sélection à scanner</div>
<div class="abs" style="left:18.8px;top:65.4px;width:69.2px;height:17px;background:#fff;border:1px solid #8ea6b7;border-radius:1.5px;line-height:14px;color:#1a1a1a"><span class="abs" style="left:3.8px;top:0.2px">Journalier</span><svg class="abs" style="left:57.6px;top:6px" width="6" height="4" viewBox="0 0 6 4"><path d="M0 .3H6L3 3.8z" fill="#111"/></svg></div>
<div class="abs" style="left:129px;top:64.4px;width:20.4px;height:20.2px;background:linear-gradient(180deg,#4f93ea,#3a7ad6);border:1px solid #3a74c8;border-radius:2.5px 0 0 2.5px"><svg class="abs" style="left:4.4px;top:3.6px" width="10" height="12" viewBox="0 0 10 12"><path d="M5 .6L9.4 5.6H6.9V11.2H3.1V5.6H.6z" fill="#fff"/></svg></div>
<div class="abs" style="left:149.4px;top:64.4px;width:18px;height:20.2px;background:linear-gradient(180deg,#fff,#e8eef3);border:1px solid #a9bccb;border-left:none;border-radius:0 2.5px 2.5px 0"><svg class="abs" style="left:3.8px;top:3.8px" width="10" height="12" viewBox="0 0 10 12"><path d="M5 11.4L9.4 6.4H6.9V.8H3.1V6.4H.6z" fill="#111"/></svg></div>
<div class="abs" style="left:9.2px;top:95.4px;width:198.8px;height:23.4px;background:#6fa5c6;border:1px solid #5f96b8"></div>
<div class="abs" style="left:26.8px;top:101.6px;line-height:12px;font-size:10.6px;color:#0d2238">Zone géographique :</div>
<div class="abs" style="left:137px;top:99.6px;width:52.2px;height:14.8px;background:#fff;border:1px solid #cfdde6;border-radius:1.5px;line-height:13px;color:#1a1a1a"><span class="abs" style="left:3.4px;top:0">Europe</span><svg class="abs" style="left:42px;top:5.2px" width="6" height="4" viewBox="0 0 6 4"><path d="M0 .3H6L3 3.8z" fill="#111"/></svg></div>
<div class="abs" style="left:9.2px;top:118.8px;width:198.8px;height:241.6px;background:#fff;border:1px solid #9bbacb;border-top:none"></div>
<div class="abs" style="left:15px;top:120.2px;line-height:12px;font-size:10.6px;letter-spacing:.22px;color:#1a1a1a">Listes prédéfinies</div>
<div class="abs rd" style="top:139.7px"></div><div class="abs rt" style="top:138.9px">Euronext Growth</div>
<div class="abs rd" style="top:157.2px"><span></span></div><div class="abs rt" style="top:156.4px">Euronext Actions</div>
<div class="abs rd" style="top:174.7px"></div><div class="abs rt" style="top:173.9px">Euronext <span class="sq" style="transform:scaleX(.83)">PEA</span></div>
<div class="abs rd" style="top:192.2px"></div><div class="abs rt" style="top:191.4px">Euronext <span class="sq" style="transform:scaleX(.86)">PEA-PME</span></div>
<div class="abs" style="left:30.2px;top:366px;width:10.6px;height:10.6px;background:#fff;border:1px solid #8593a0;border-radius:2px"><svg class="abs" style="left:.2px;top:.2px" width="8" height="8" viewBox="0 0 8 8"><path d="M1 4.2L3.1 6.6 7.2 1.2" stroke="#111" stroke-width="1.8" fill="none"/></svg></div>
<div class="abs" style="left:45px;top:365.8px;line-height:12px;font-size:10.85px;color:#10202f">Maintenir la fenêtre ouverte</div>
<div class="abs" style="left:38.8px;top:381.8px;width:137.2px;height:61.6px;background:linear-gradient(180deg,#ffffff 0%,#f4f4f4 50%,#e2e2e2 100%);border:1px solid #aab4bc;border-radius:2px"></div>
<div class="abs" style="left:38.8px;top:385.9px;width:137.2px;text-align:center;line-height:12px;color:#1a1a1a;font-size:10.45px;letter-spacing:.1px">Exécuter ProScreener</div>
<svg class="abs" style="left:55px;top:399.5px" width="104" height="42" viewBox="0 0 104 42"><defs><linearGradient id="rg" x1="0" y1="0" x2="0" y2="1"><stop offset="0" stop-color="#7c9a5a"/><stop offset=".5" stop-color="#587a3c"/><stop offset="1" stop-color="#3c5826"/></linearGradient><linearGradient id="sq" x1="0" y1="0" x2="0" y2="1"><stop offset="0" stop-color="#dcdcda"/><stop offset="1" stop-color="#b4b5b2"/></linearGradient></defs><g font-family="Liberation Sans" font-size="4.3" fill="#c6c4d2" xml:space="preserve"><text x="5.4" y="5.6" textLength="23.4">3100 2017</text><text x="76" y="5.6" textLength="23.2">3037 3776</text><text x="5.4" y="9.8" textLength="23.4">3206 6774</text><text x="76" y="9.8" textLength="23.2">9084 3203</text><text x="5.4" y="14.4" textLength="23.4">7078 1109</text><text x="76" y="14.4" textLength="23.2">7377 2707</text><text x="5.4" y="25.1" textLength="23.4">4187  17</text><text x="76" y="25.1" textLength="23.2">  17 1083</text><text x="5.4" y="29.7" textLength="23.4">9260 1341</text><text x="76" y="29.7" textLength="23.2">4134 8604</text><text x="5.4" y="34.8" textLength="23.4">3104 2757</text><text x="76" y="34.8" textLength="23.2">3637 3831</text><text x="5.4" y="39.5" textLength="23.4">1086 7031</text><text x="76" y="39.5" textLength="23.2">2070 7837</text></g><path d="M5.5 21.4 L9.2 13.9 L12.9 18.6 L15.7 20.4 L19.4 24.2 L24 11.2 L27.7 31.6 L33.3 23.2" stroke="#1f9e2c" stroke-width="2.3" fill="none" stroke-linejoin="round" stroke-linecap="round"/><path d="M72.2 30.6 L74.6 16.7 L78.7 22.3 L80.6 19 L88 17.7 L90.8 20.4 L94.5 15.3 L96.4 17.7 L99.1 12.1" stroke="#1f9e2c" stroke-width="2.3" fill="none" stroke-linejoin="round" stroke-linecap="round"/><rect x="33.3" y="1.9" width="38" height="38" rx="2.4" fill="url(#sq)" stroke="#a2a3a0" stroke-width=".8"/><circle cx="52.8" cy="20.9" r="16" fill="#6f7a62"/><circle cx="52.8" cy="20.9" r="14.6" fill="url(#rg)"/><circle cx="52.8" cy="20.9" r="10.4" fill="none" stroke="#9ab882" stroke-width=".7" opacity=".8"/><circle cx="52.8" cy="20.9" r="5.6" fill="none" stroke="#9ab882" stroke-width=".7" opacity=".8"/><path d="M38.2 20.9H67.4M52.8 6.3V35.5" stroke="#a7c48e" stroke-width=".7" opacity=".85"/><path d="M52.8 20.9 L60.6 8.6 A14.6 14.6 0 0 1 65.4 13.6 Z" fill="#b5d49a" opacity=".5"/><path d="M52.8 20.9 L60.6 8.6" stroke="#cfe6b8" stroke-width=".8"/><circle cx="52.4" cy="11.6" r="1.1" fill="#e4f2d2"/><circle cx="57.6" cy="27.6" r=".9" fill="#cfe3b8"/></svg>

 </div>
 <div id="rbot">
  <svg class="abs" style="left:5.2px;top:3.3px" width="14.4" height="11.6" viewBox="0 0 15 12"><rect x="0" y="0" width="15" height="12" fill="#3a4147"/><rect x="2.4" y="2.8" width="10.2" height="6.4" fill="#2c3237"/><path d="M5.6 3.8l4.6 2.2-4.6 2.2z" fill="#f4f4f4"/><rect x="0.9" y=".7" width="1.4" height="1.3" fill="#f2f2f2"/><rect x="0.9" y="10" width="1.4" height="1.3" fill="#f2f2f2"/><rect x="3.3" y=".7" width="1.4" height="1.3" fill="#f2f2f2"/><rect x="3.3" y="10" width="1.4" height="1.3" fill="#f2f2f2"/><rect x="5.7" y=".7" width="1.4" height="1.3" fill="#f2f2f2"/><rect x="5.7" y="10" width="1.4" height="1.3" fill="#f2f2f2"/><rect x="8.1" y=".7" width="1.4" height="1.3" fill="#f2f2f2"/><rect x="8.1" y="10" width="1.4" height="1.3" fill="#f2f2f2"/><rect x="10.5" y=".7" width="1.4" height="1.3" fill="#f2f2f2"/><rect x="10.5" y="10" width="1.4" height="1.3" fill="#f2f2f2"/><rect x="12.9" y=".7" width="1.4" height="1.3" fill="#f2f2f2"/><rect x="12.9" y="10" width="1.4" height="1.3" fill="#f2f2f2"/></svg>
  <span class="abs b" style="left:23.5px;top:2.4px;line-height:12px;font-size:10.6px;color:#2a4ad6;text-decoration:underline">Formations vidéo</span>
 </div>
 <div class="frame"></div>
</div>
</body></html>
